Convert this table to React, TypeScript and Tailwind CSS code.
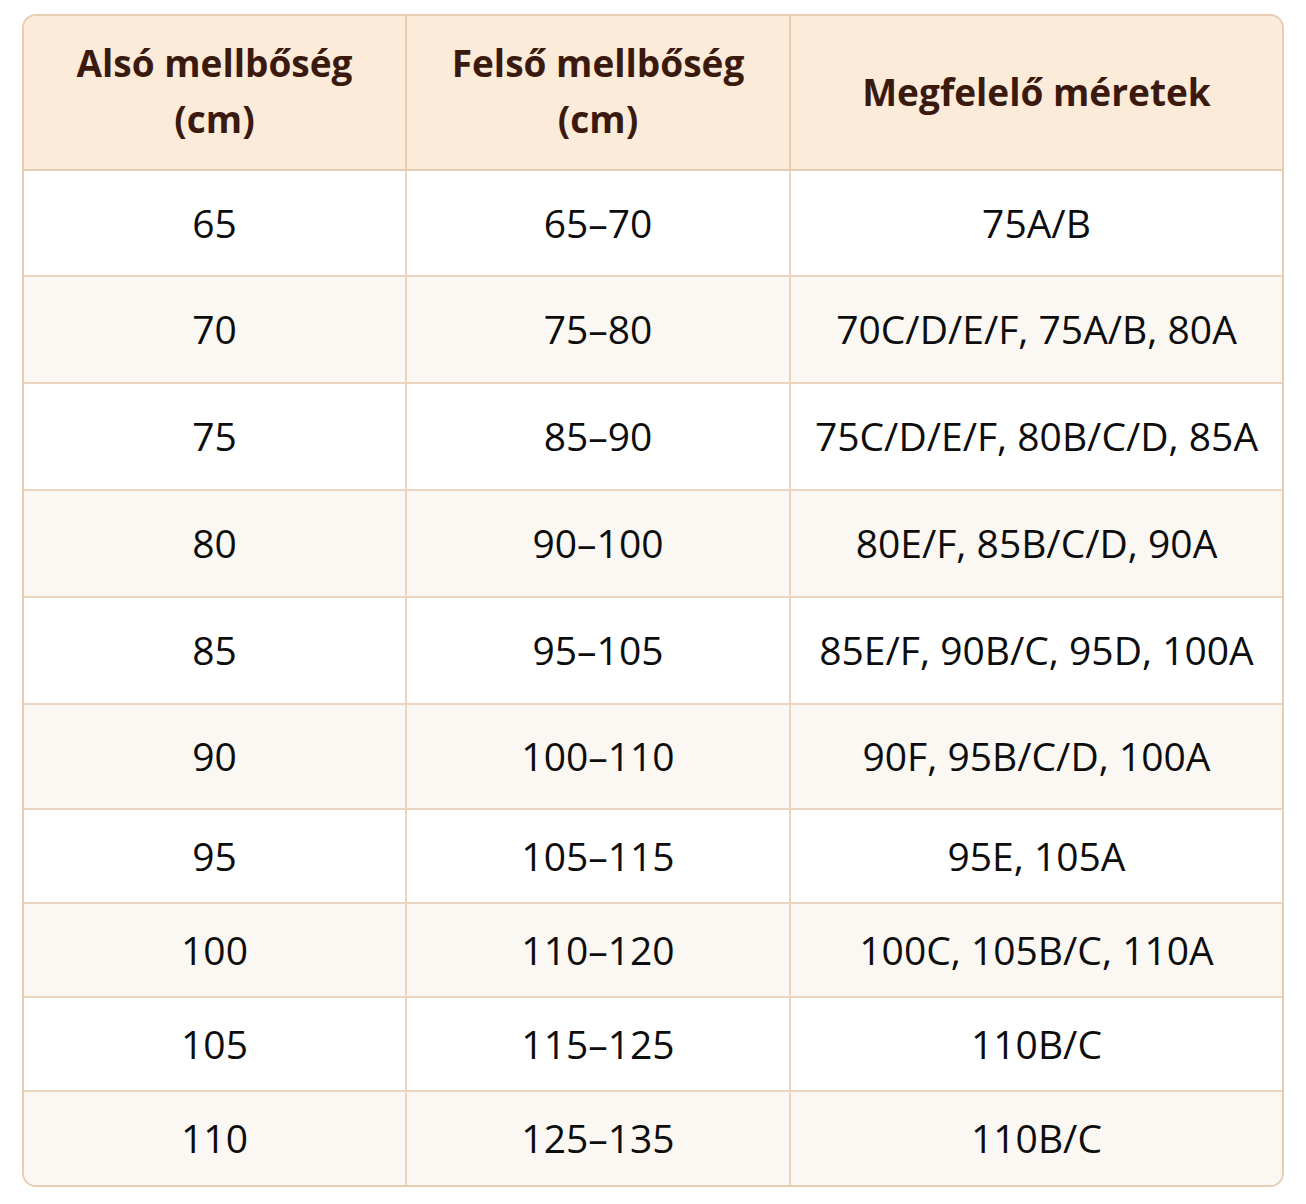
import React from 'react';

const rows: { under: string; over: string; sizes: string; h: string }[] = [
  { under: '65', over: '65–70', sizes: '75A/B', h: 'h-[106px]' },
  { under: '70', over: '75–80', sizes: '70C/D/E/F, 75A/B, 80A', h: 'h-[107px]' },
  { under: '75', over: '85–90', sizes: '75C/D/E/F, 80B/C/D, 85A', h: 'h-[107px]' },
  { under: '80', over: '90–100', sizes: '80E/F, 85B/C/D, 90A', h: 'h-[107px]' },
  { under: '85', over: '95–105', sizes: '85E/F, 90B/C, 95D, 100A', h: 'h-[107px]' },
  { under: '90', over: '100–110', sizes: '90F, 95B/C/D, 100A', h: 'h-[105px]' },
  { under: '95', over: '105–115', sizes: '95E, 105A', h: 'h-[94px]' },
  { under: '100', over: '110–120', sizes: '100C, 105B/C, 110A', h: 'h-[94px]' },
  { under: '105', over: '115–125', sizes: '110B/C', h: 'h-[94px]' },
  { under: '110', over: '125–135', sizes: '110B/C', h: 'h-[93px]' },
];

export default function App() {
  return (
    <div className="min-h-screen bg-white pt-[14px] pl-[22px] font-['Open_Sans',sans-serif]">
      <div className="w-[1262px] rounded-[14px] border-2 border-[#e8cdb3] overflow-hidden">
        {/* Header */}
        <div className="grid grid-cols-[383px_384px_1fr] h-[155px] bg-[#fdebd9] text-[#3a1a0f] font-bold text-[37px] leading-[56px] border-b-2 border-[#e8cdb3]">
          <div className="flex items-center justify-center text-center border-r-2 border-[#e8cdb3] pb-[4px]">
            <span>Alsó mellbőség<br />(cm)</span>
          </div>
          <div className="flex items-center justify-center text-center border-r-2 border-[#e8cdb3] pb-[4px]">
            <span>Felső mellbőség<br />(cm)</span>
          </div>
          <div className="flex items-center justify-center text-center pb-[2px]">
            <span>Megfelelő méretek</span>
          </div>
        </div>

        {/* Body */}
        {rows.map((r, i) => (
          <div
            key={i}
            className={`grid grid-cols-[383px_384px_1fr] ${r.h} text-[39px] text-[#0d0d0d] ${
              i % 2 === 1 ? 'bg-[#fbf8f4]' : 'bg-white'
            } ${i < rows.length - 1 ? 'border-b-2 border-[#ecd5c0]' : ''}`}
          >
            <div className="flex items-center justify-center border-r-2 border-[#ecd5c0]">{r.under}</div>
            <div className="flex items-center justify-center border-r-2 border-[#ecd5c0]">{r.over}</div>
            <div className="flex items-center justify-center">{r.sizes}</div>
          </div>
        ))}
      </div>
    </div>
  );
}
